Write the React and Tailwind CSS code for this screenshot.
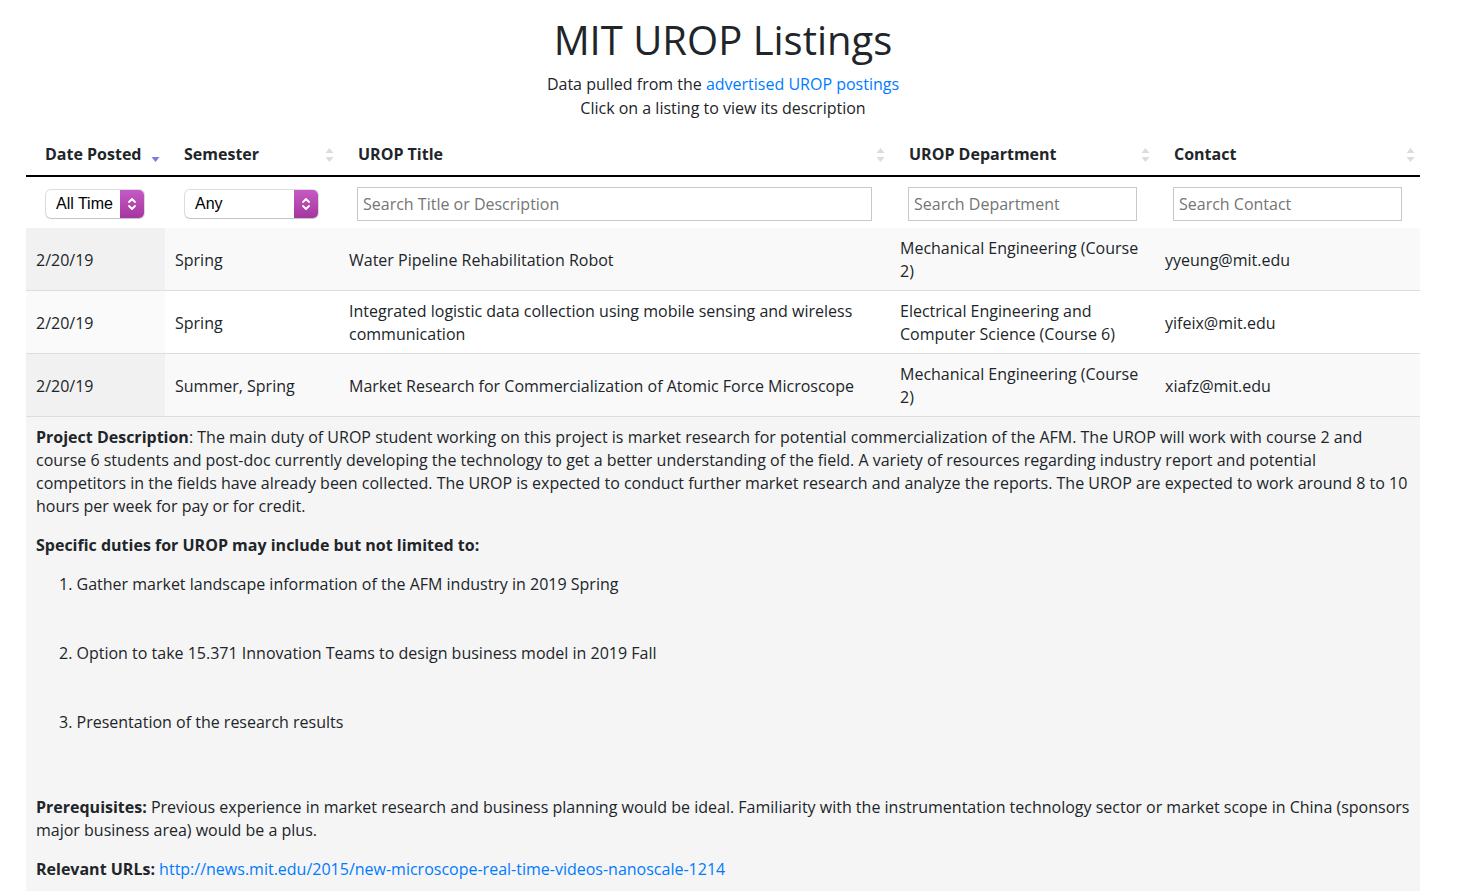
import React from "react";

function SortBoth() {
  return (
    <svg width="9" height="14" viewBox="0 0 9 14" className="shrink-0">
      <path d="M4.5 0 L8.5 5 L0.5 5 Z" fill="#dcdcdc" />
      <path d="M4.5 14 L8.5 9 L0.5 9 Z" fill="#dcdcdc" />
    </svg>
  );
}

function SortDesc() {
  return (
    <svg width="9" height="14" viewBox="0 0 9 14" className="shrink-0">
      <path d="M4.5 14 L8.5 9 L0.5 9 Z" fill="#7b7bdd" />
    </svg>
  );
}

function FakeSelect({ label, width }) {
  return (
    <div
      className={`flex h-[28px] ${width} items-stretch rounded-[5px] bg-white shadow-[0_0_0_1px_rgba(0,0,0,0.13),0_1px_1px_rgba(0,0,0,0.12)]`}
    >
      <div className="flex flex-1 items-center pl-[10px] font-['Liberation_Sans',Arial,sans-serif] text-[16px] text-black">
        {label}
      </div>
      <div className="flex w-[24px] items-center justify-center rounded-r-[5px] bg-gradient-to-b from-[#c65ac4] to-[#a4369f]">
        <svg width="10" height="16" viewBox="0 0 10 16">
          <path d="M2 6 L5 3 L8 6" stroke="white" strokeWidth="1.8" fill="none" strokeLinecap="round" strokeLinejoin="round" />
          <path d="M2 10 L5 13 L8 10" stroke="white" strokeWidth="1.8" fill="none" strokeLinecap="round" strokeLinejoin="round" />
        </svg>
      </div>
    </div>
  );
}

const rows = [
  {
    date: "2/20/19",
    sem: "Spring",
    title: "Water Pipeline Rehabilitation Robot",
    dept: "Mechanical Engineering (Course 2)",
    contact: "yyeung@mit.edu",
  },
  {
    date: "2/20/19",
    sem: "Spring",
    title: "Integrated logistic data collection using mobile sensing and wireless communication",
    dept: "Electrical Engineering and Computer Science (Course 6)",
    contact: "yifeix@mit.edu",
  },
  {
    date: "2/20/19",
    sem: "Summer, Spring",
    title: "Market Research for Commercialization of Atomic Force Microscope",
    dept: "Mechanical Engineering (Course 2)",
    contact: "xiafz@mit.edu",
  },
];

export default function App() {
  return (
    <div className="min-h-screen bg-white font-['Open_Sans',sans-serif] text-[#212529]">
      <div className="ml-[26px] w-[1394px] pt-[16px]">
        <h1 className="text-center text-[40px] leading-[48px] font-normal">MIT UROP Listings</h1>
        <div className="mt-[8px] text-center text-[16px] leading-[24px]">
          <p>
            Data pulled from the <a className="text-[#007bff]">advertised UROP postings</a>
          </p>
          <p>Click on a listing to view its description</p>
        </div>

        <table className="mt-[13px] w-full table-fixed border-collapse text-[16px]">
          <colgroup>
            <col className="w-[139px]" />
            <col className="w-[174px]" />
            <col className="w-[551px]" />
            <col className="w-[265px]" />
            <col className="w-[265px]" />
          </colgroup>
          <thead>
            <tr className="border-b-2 border-black">
              {[
                ["Date Posted", "desc"],
                ["Semester", "both"],
                ["UROP Title", "both"],
                ["UROP Department", "both"],
                ["Contact", "both"],
              ].map(([h, s]) => (
                <th key={h} className="py-[9px] pl-[19px] pr-[5px] text-left font-bold leading-[24px]">
                  <div className="flex items-center justify-between">
                    <span>{h}</span>
                    <span className="pt-[2px]">{s === "desc" ? <SortDesc /> : <SortBoth />}</span>
                  </div>
                </th>
              ))}
            </tr>
          </thead>
          <tbody>
            <tr>
              <td className="pl-[20px] pt-[13px] pb-[10px]">
                <FakeSelect label="All Time" width="w-[98px]" />
              </td>
              <td className="pl-[20px] pt-[13px] pb-[10px]">
                <FakeSelect label="Any" width="w-[133px]" />
              </td>
              <td className="px-[18px] pt-[10px] pb-[7px]">
                <div className="flex h-[34px] items-center border border-[#c8c8c8] pl-[5px] text-[#757575]">
                  Search Title or Description
                </div>
              </td>
              <td className="px-[18px] pt-[10px] pb-[7px]">
                <div className="flex h-[34px] items-center border border-[#c8c8c8] pl-[5px] text-[#757575]">
                  Search Department
                </div>
              </td>
              <td className="px-[18px] pt-[10px] pb-[7px]">
                <div className="flex h-[34px] items-center border border-[#c8c8c8] pl-[5px] text-[#757575]">
                  Search Contact
                </div>
              </td>
            </tr>
            {rows.map((r, i) => {
              const odd = i % 2 === 0;
              const first = odd ? "bg-[#f1f1f1]" : "bg-[#fafafa]";
              const rest = odd ? "bg-[#f9f9f9]" : "bg-white";
              const cell = "h-[62px] px-[10px] pt-[9px] pb-[7px] align-middle leading-[23px]";
              return (
                <tr key={i} className="border-b border-[#dddddd]">
                  <td className={`${cell} ${first}`}>{r.date}</td>
                  <td className={`${cell} ${rest}`}>{r.sem}</td>
                  <td className={`${cell} ${rest}`}>{r.title}</td>
                  <td className={`${cell} ${rest}`}>{r.dept}</td>
                  <td className={`${cell} ${rest}`}>{r.contact}</td>
                </tr>
              );
            })}
          </tbody>
        </table>

        <div className="bg-[#f5f5f5] px-[10px] pt-[9px] pb-[20px] text-[16px] leading-[23px]">
          <p className="mb-[16px]">
            <b>Project Description</b>: The main duty of UROP student working on this project is market research for
            potential commercialization of the AFM. The UROP will work with course 2 and course 6 students and post-doc
            currently developing the technology to get a better understanding of the field. A variety of resources
            regarding industry report and potential competitors in the fields have already been collected. The UROP is
            expected to conduct further market research and analyze the reports. The UROP are expected to work around 8
            to 10 hours per week for pay or for credit.
          </p>
          <p className="mb-[16px] font-bold">Specific duties for UROP may include but not limited to:</p>
          <ol className="list-inside list-decimal pl-[23px]">
            <li className="mb-[46px]">Gather market landscape information of the AFM industry in 2019 Spring</li>
            <li className="mb-[46px]">Option to take 15.371 Innovation Teams to design business model in 2019 Fall</li>
            <li className="mb-[62px]">Presentation of the research results</li>
          </ol>
          <p className="mb-[16px]">
            <b>Prerequisites:</b> Previous experience in market research and business planning would be ideal.
            Familiarity with the instrumentation technology sector or market scope in China (sponsors major business
            area) would be a plus.
          </p>
          <p>
            <b>Relevant URLs:</b>{" "}
            <a className="text-[#007bff]">http://news.mit.edu/2015/new-microscope-real-time-videos-nanoscale-1214</a>
          </p>
        </div>
      </div>
    </div>
  );
}
